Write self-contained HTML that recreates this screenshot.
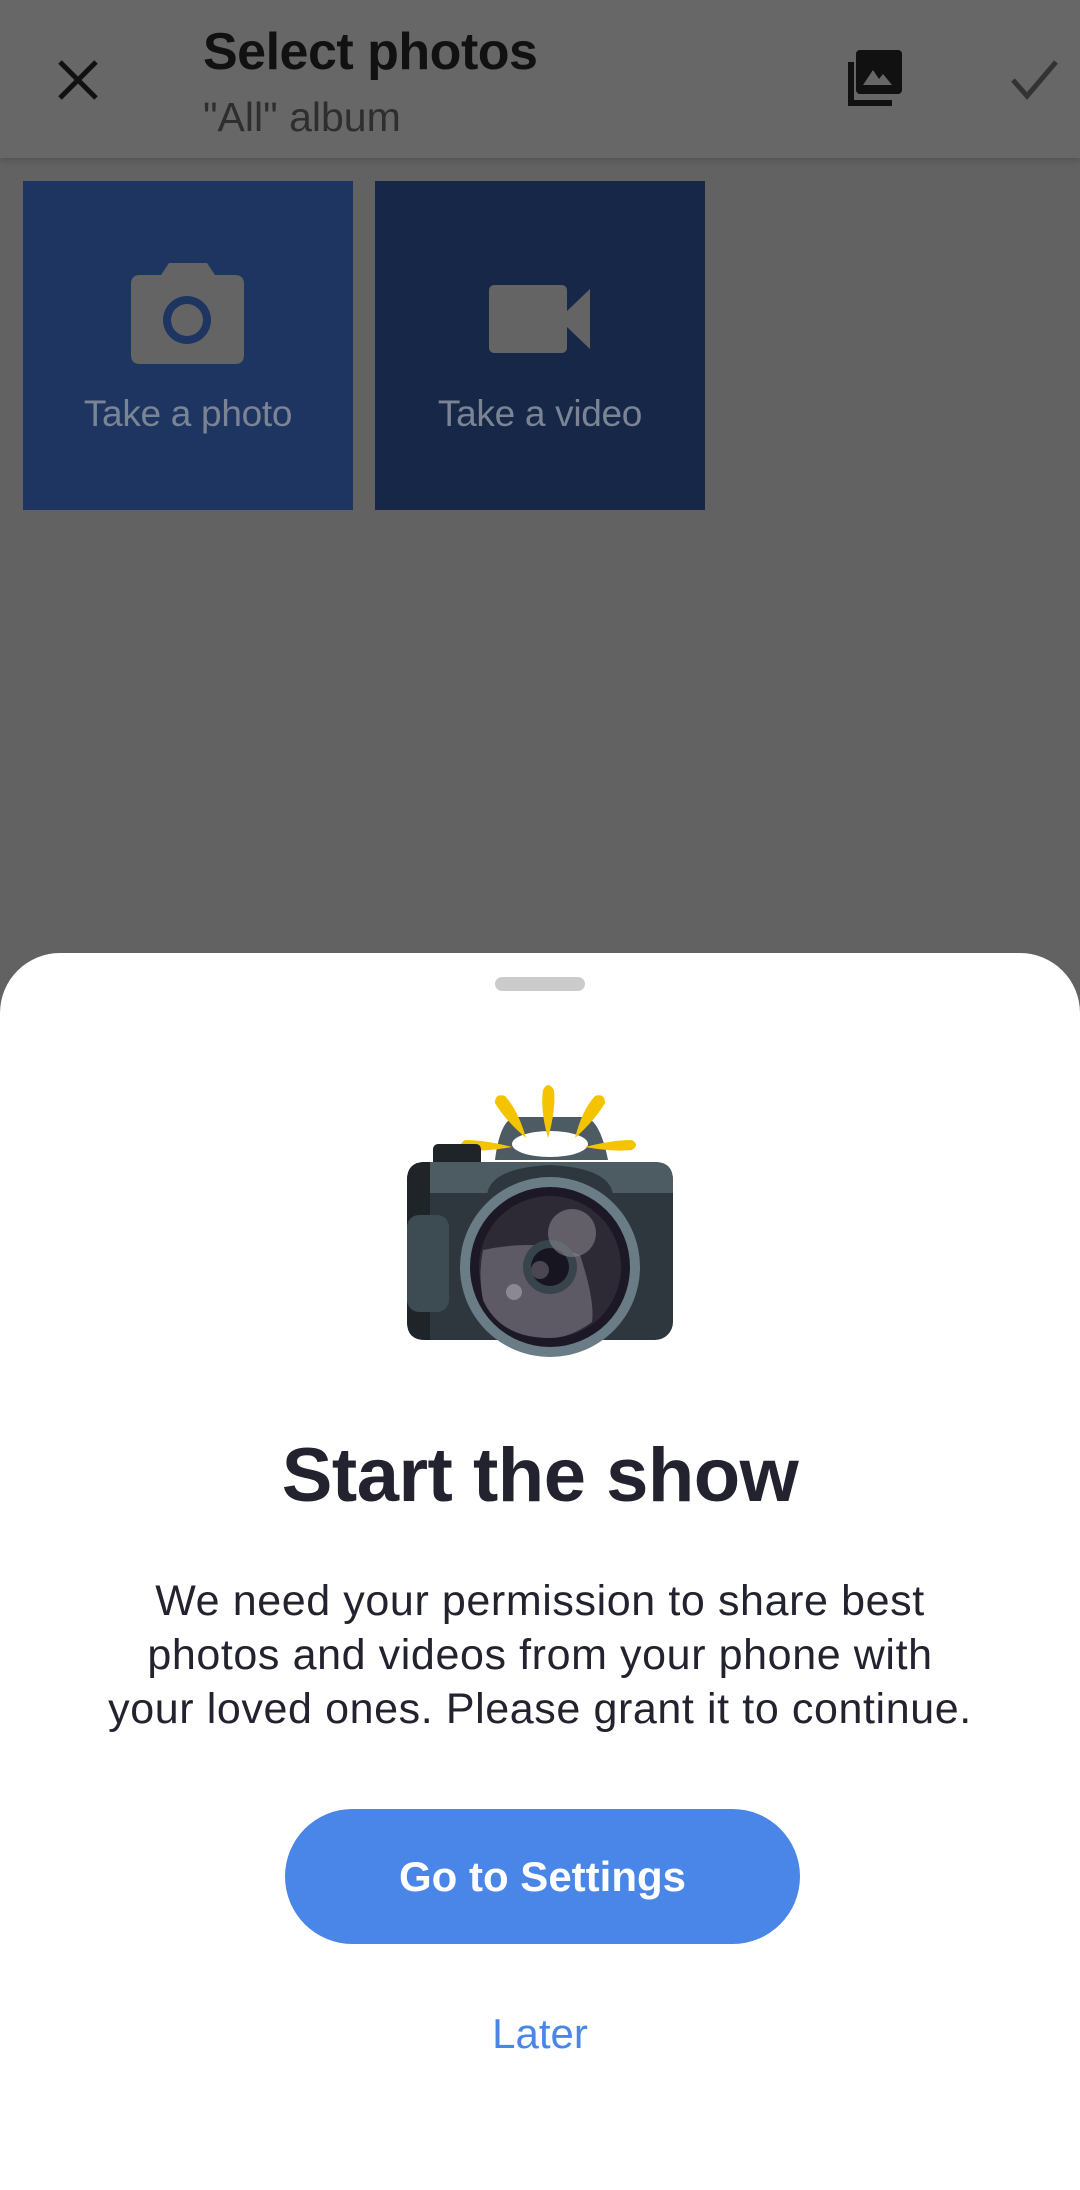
<!DOCTYPE html>
<html><head><meta charset="utf-8"><style>
html,body{margin:0;padding:0;}
body{width:1080px;height:2190px;position:relative;overflow:hidden;background:#626262;font-family:"Liberation Sans",sans-serif;}
.bar{position:absolute;left:0;top:0;width:1080px;height:158px;background:#676767;box-shadow:0 3px 6px rgba(0,0,0,0.15);}
.t1{position:absolute;left:203px;top:22px;font-size:52px;color:#111;font-weight:bold;letter-spacing:-0.5px;}
.t2{position:absolute;left:203px;top:94px;font-size:41px;color:#2e2e2e;}
.tile{position:absolute;top:181px;width:330px;height:329px;}
.lbl{position:absolute;left:0;width:100%;text-align:center;top:212px;font-size:37px;color:#7a8494;letter-spacing:-0.3px;}
.sheet{position:absolute;left:0;top:953px;width:1080px;height:1237px;background:#fff;border-radius:60px 60px 0 0;}
.handle{position:absolute;left:495px;top:977px;width:90px;height:14px;border-radius:7px;background:#cbcbcb;}
.h1{position:absolute;left:0;width:1080px;top:1432px;text-align:center;font-size:76px;font-weight:bold;color:#22232e;letter-spacing:-0.5px;}
.body{position:absolute;left:0;width:1080px;top:1574px;text-align:center;font-size:43px;line-height:54px;color:#22232e;letter-spacing:0.6px;}
.btn{position:absolute;left:285px;top:1809px;width:515px;height:135px;border-radius:68px;background:#4a86e8;color:#fff;font-size:42px;font-weight:bold;text-align:center;line-height:135px;}
.later{position:absolute;left:0;width:1080px;top:2010px;text-align:center;font-size:42px;color:#4a86e8;}
</style></head><body>
<div class="bar">
<svg style="position:absolute;left:56px;top:58px" width="44" height="44" viewBox="0 0 44 44"><path d="M4 4L40 40M40 4L4 40" stroke="#111" stroke-width="5"/></svg>
<div class="t1">Select photos</div>
<div class="t2">"All" album</div>
<svg style="position:absolute;left:846px;top:48px" width="60" height="60" viewBox="0 0 60 60"><rect x="10" y="2" width="46" height="44" rx="4" fill="#111"/><path d="M2 14V58H46V52H8V14Z" fill="#111"/><path d="M17 37L27 22L33 31L37 26L46 37Z" fill="#676767"/></svg>
<svg style="position:absolute;left:1010px;top:58px" width="50" height="44" viewBox="0 0 50 44"><path d="M3 22L17 38L46 4" stroke="#333" stroke-width="5" fill="none"/></svg>
</div>
<div class="tile" style="left:23px;background:#1d3560">
<svg style="position:absolute;left:108px;top:82px" width="113" height="101" viewBox="0 0 113 101"><path d="M30 12L38 0H76L84 12H104Q113 12 113 21V92Q113 101 104 101H9Q0 101 0 92V21Q0 12 9 12Z" fill="#646464"/><circle cx="56" cy="57" r="24" fill="#1d3560"/><circle cx="56" cy="57" r="16" fill="#646464"/></svg>
<div class="lbl">Take a photo</div></div>
<div class="tile" style="left:375px;background:#162747">
<svg style="position:absolute;left:114px;top:104px" width="101" height="68" viewBox="0 0 101 68"><rect x="0" y="0" width="78" height="68" rx="5" fill="#646464"/><path d="M78 26L101 4V64L78 42Z" fill="#646464"/></svg>
<div class="lbl">Take a video</div></div>
<div class="sheet"></div>
<div class="handle"></div>
<svg style="position:absolute;left:380px;top:1060px" width="320" height="300" viewBox="0 0 320 300">
<path d="M115 100Q120 60 135 57H205Q220 60 228 100Z" fill="#4d5b63"/>
<ellipse cx="170" cy="84" rx="38" ry="13" fill="#fff"/>
<g fill="#f5c400">
<path d="M168 78Q160 50 163 30Q168 20 174 30Q176 50 168 78Z"/>
<path d="M146 78Q125 60 115 43Q115 33 125 36Q138 50 146 78Z"/>
<path d="M195 78Q202 50 215 36Q225 33 225 43Q215 60 195 78Z"/>
<path d="M132 87Q105 92 85 90Q77 85 85 80Q105 80 132 87Z"/>
<path d="M205 87Q232 80 252 80Q260 85 252 90Q232 92 205 87Z"/>
</g>
<rect x="53" y="84" width="48" height="26" rx="5" fill="#1e2428"/>
<rect x="27" y="102" width="266" height="178" rx="18" fill="#2e373e"/>
<path d="M45 102H275Q293 102 293 120V133H27V120Q27 102 45 102Z" fill="#4d5b63"/>
<path d="M45 102H50V280H45Q27 280 27 262V120Q27 102 45 102Z" fill="#1e2428"/>
<rect x="27" y="155" width="42" height="97" rx="12" fill="#3d4b52"/>
<path d="M107 135Q110 108 170 105Q230 108 233 135Z" fill="#2e373e"/>
<circle cx="170" cy="207" r="90" fill="#6a7d86"/>
<circle cx="170" cy="207" r="80" fill="#1c1826"/>
<circle cx="170" cy="207" r="71" fill="#2e2a35"/>
<path d="M103 190Q160 178 200 195Q215 240 212 262Q190 278 170 278Q120 278 103 240Q98 215 103 190Z" fill="#5d5a66"/>
<circle cx="170" cy="207" r="27" fill="#37444b"/>
<circle cx="170" cy="207" r="19" fill="#17151f"/>
<circle cx="192" cy="173" r="24" fill="#85838a" opacity="0.6"/>
<circle cx="160" cy="210" r="9" fill="#4a4652"/>
<circle cx="134" cy="232" r="8" fill="#8a8890"/>
</svg>
<div class="h1">Start the show</div>
<div class="body">We need your permission to share best<br>photos and videos from your phone with<br>your loved ones. Please grant it to continue.</div>
<div class="btn">Go to Settings</div>
<div class="later">Later</div>
</body></html>
